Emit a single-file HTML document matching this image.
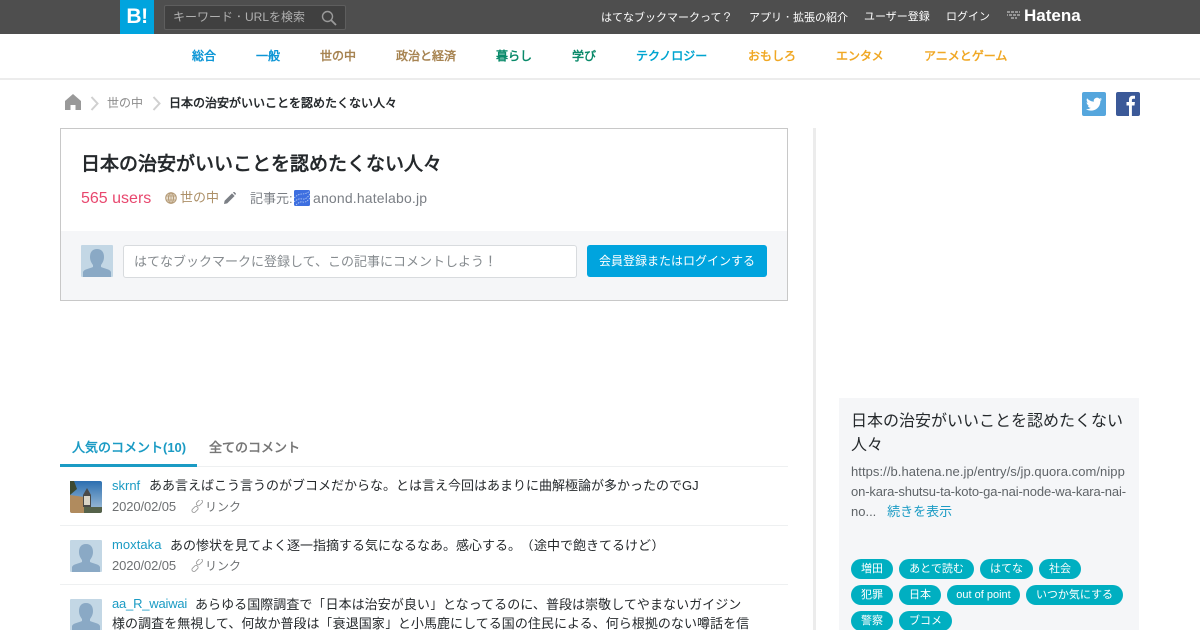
<!DOCTYPE html>
<html lang="ja"><head><meta charset="utf-8"><title>日本の治安がいいことを認めたくない人々</title>
<style>
html,body{margin:0;padding:0;width:1200px;height:630px;overflow:hidden;background:#fff}
body{position:relative;font-family:"Liberation Sans","WenQuanYi Zen Hei",sans-serif;color:#25292c}
i{font-style:normal;font-family:"IPAGothic","WenQuanYi Zen Hei",sans-serif}
.a{position:absolute;white-space:nowrap}
.nav{font-size:12px;font-weight:bold;top:49px;line-height:14px}
.top{font-size:11px;color:#fff;top:11px;line-height:13px}
.tag{position:absolute;height:20px;line-height:20px;border-radius:10px;background:#00afc1;color:#fff;font-size:11px;text-align:center}
.blue{color:#1b9bc4}
.gray{color:#6d7072}
.sep{position:absolute;left:60px;width:728px;height:1px;background:#eef0f1}
</style></head><body>
<div class="a" style="left:0;top:0;width:1200px;height:34px;background:#4e4e4e"></div>
<div class="a" style="left:120px;top:0;width:34px;height:34px;background:#00a4de;color:#fff;font-weight:bold;font-size:21px;line-height:33px;text-align:center;letter-spacing:-.5px">B!</div>
<div class="a" style="left:164px;top:5px;width:180px;height:23px;background:#404040;border:1px solid #5e5e5e;border-radius:2px"></div>
<div class="a" style="left:173px;top:10px;font-size:12px;line-height:14px;color:#b0b0b0">キーワード<i>・</i>URLを検索</div>
<svg class="a" style="left:321px;top:10px" width="16" height="16" viewBox="0 0 16 16"><circle cx="6.500" cy="6.500" r="5" fill="none" stroke="#9a9a9a" stroke-width="1.400"/><path d="M10 10l5 5" stroke="#9a9a9a" stroke-width="1.800"/></svg>
<div class="a top" style="left:601px">はてなブックマークって<i>？</i></div>
<div class="a top" style="left:749px">アプリ<i>・</i>拡張の紹介</div>
<div class="a top" style="left:864px">ユーザー登録</div>
<div class="a top" style="left:946px">ログイン</div>
<svg class="a" style="left:1006px;top:10px" width="16" height="12" viewBox="0 0 16 12"><path d="M1 2h13M3 5h11M1 5h1M5 8h6" stroke="#ddd" stroke-width="1" stroke-dasharray="3 1" fill="none"/></svg>
<div class="a" style="left:1024px;top:6px;font-size:17px;line-height:20px;font-weight:bold;color:#fff">Hatena</div>

<div class="a" style="left:0;top:78px;width:1200px;height:2px;background:#ececec"></div>
<div class="a nav" style="left:192px;color:#0d96d6">総合</div>
<div class="a nav" style="left:256px;color:#0d96d6">一般</div>
<div class="a nav" style="left:320px;color:#a78452">世の中</div>
<div class="a nav" style="left:396px;color:#a78452">政治と経済</div>
<div class="a nav" style="left:496px;color:#0a8a6a">暮らし</div>
<div class="a nav" style="left:572px;color:#0a8a6a">学び</div>
<div class="a nav" style="left:636px;color:#00a4d0">テクノロジー</div>
<div class="a nav" style="left:748px;color:#f0a825">おもしろ</div>
<div class="a nav" style="left:836px;color:#f0a825">エンタメ</div>
<div class="a nav" style="left:924px;color:#f0a825">アニメとゲーム</div>

<svg class="a" style="left:65px;top:94px" width="16" height="16" viewBox="0 0 16 16"><path d="M8 0L0 7v9h5.500v-5h5v5H16V7z" fill="#999"/></svg>
<svg class="a" style="left:90px;top:96px" width="10" height="15" viewBox="0 0 10 15"><path d="M1.500 1l6 6.500-6 6.500" fill="none" stroke="#d0d0d0" stroke-width="2"/></svg>
<div class="a" style="left:107px;top:96px;font-size:12px;line-height:14px;color:#8b8b8b">世の中</div>
<svg class="a" style="left:152px;top:96px" width="10" height="15" viewBox="0 0 10 15"><path d="M1.500 1l6 6.500-6 6.500" fill="none" stroke="#d0d0d0" stroke-width="2"/></svg>
<div class="a" style="left:169px;top:96px;font-size:12px;line-height:14px;font-weight:bold;color:#25292c">日本の治安がいいことを認めたくない人々</div>

<svg class="a" style="left:1082px;top:92px" width="24" height="24" viewBox="0 0 24 24"><rect width="24" height="24" rx="2" fill="#55a6dd"/><path d="M20 7.200c-.6.300-1.200.4-1.900.5.700-.4 1.200-1 1.400-1.800-.6.400-1.300.6-2.100.8a3.300 3.300 0 0 0-5.600 3C9.100 9.600 6.700 8.300 5.100 6.300c-.9 1.500-.4 3.400 1 4.400-.5 0-1-.2-1.500-.4 0 1.600 1.100 3 2.600 3.300-.5.100-1 .1-1.500 0 .4 1.300 1.600 2.200 3.100 2.300A6.600 6.600 0 0 1 4 17.200c5.500 3.400 14.400.6 14.400-8.500.6-.4 1.200-.9 1.600-1.500z" fill="#fff"/></svg>
<svg class="a" style="left:1116px;top:92px" width="24" height="24" viewBox="0 0 24 24"><rect width="24" height="24" rx="2" fill="#3b5998"/><path d="M13 24V13.500h-2.500V10H13V7.500C13 5 14.500 3.700 16.700 3.700c1 0 1.900.1 2.300.1v3h-1.600c-1.200 0-1.500.6-1.500 1.400V10h3l-.4 3.500h-2.600V24z" fill="#fff"/></svg>

<div class="a" style="left:60px;top:128px;width:726px;height:171px;border:1px solid #c8c8c8"></div>
<div class="a" style="left:61px;top:231px;width:726px;height:69px;background:#f5f6f8"></div>
<div class="a" style="left:81px;top:153px;font-size:19px;line-height:24px;font-weight:bold;color:#25292c">日本の治安がいいことを認めたくない人々</div>
<div class="a" style="left:81px;top:189px;font-size:16px;line-height:19px;color:#e8476e">565 users</div>
<svg class="a" style="left:165px;top:192px" width="12" height="12" viewBox="0 0 12 12"><circle cx="6" cy="6" r="5.300" fill="#e8dfd0" stroke="#b49a76"/><ellipse cx="6" cy="6" rx="2.500" ry="5.300" fill="none" stroke="#b49a76"/><path d="M.7 4h10.600M.7 8h10.600M6 .7v10.600" stroke="#b49a76" stroke-width=".8"/></svg>
<div class="a" style="left:180px;top:190px;font-size:13px;line-height:16px;color:#ad9068">世の中</div>
<svg class="a" style="left:224px;top:192px" width="12" height="12" viewBox="0 0 12 12"><path d="M0 12l.6-3.200L8 1.400l2.600 2.600L3.200 11.400zM9 .5l.5-.5c.5-.3 1 0 1.200.2l1 1c.3.300.4.800 0 1.200l-.6.600z" fill="#7b7f85"/></svg>
<div class="a" style="left:250px;top:191px;font-size:13px;line-height:15px;color:#7b7f85">記事元:</div>
<svg class="a" style="left:294px;top:190px" width="16" height="16" viewBox="0 0 16 16"><rect width="16" height="16" rx="1.500" fill="#3d6fe0"/><path d="M0 12q4-4 8-3t8-5M0 8q4-4 8-4t8-3M2 15q4-4 7-3t7-4" fill="none" stroke="#b9cdf5" stroke-width=".8" stroke-dasharray="1.500 1"/></svg>
<div class="a" style="left:313px;top:190px;font-size:14px;line-height:16px;letter-spacing:.17px;color:#7b7f85">anond.hatelabo.jp</div>

<svg class="a" style="left:81px;top:245px" width="32" height="32" viewBox="0 0 32 32"><rect width="32" height="32" rx="1" fill="#c3d7e5"/><path d="M16 4c5 0 7 3.500 7 8 0 3.500-1.500 6-3 8v2c3 1.500 9 2 10 5v5H2v-5c1-3 7-3.500 10-5v-2c-1.500-2-3-4.500-3-8 0-4.500 2-8 7-8z" fill="#8aa9c5"/></svg>
<div class="a" style="left:123px;top:245px;width:452px;height:31px;background:#fff;border:1px solid #d8dbde;border-radius:3px"></div>
<div class="a" style="left:134px;top:254px;font-size:13px;line-height:16px;color:#868b8f">はてなブックマークに登録して、この記事にコメントしよう<i>！</i></div>
<div class="a" style="left:587px;top:245px;width:180px;height:32px;background:#00a4de;border-radius:3px;color:#fff;font-size:12px;line-height:32px;text-align:center">会員登録またはログインする</div>

<div class="a" style="left:813px;top:128px;width:3px;height:502px;background:#ececec"></div>

<div class="a" style="left:72px;top:440px;font-size:13px;line-height:16px;font-weight:bold;color:#1b9bc4">人気のコメント(10)</div>
<div class="a" style="left:209px;top:440px;font-size:13px;line-height:16px;font-weight:bold;color:#777">全てのコメント</div>
<div class="a" style="left:60px;top:466px;width:728px;height:1px;background:#eef0f1"></div>
<div class="a" style="left:60px;top:464px;width:137px;height:3px;background:#1b9bc4"></div>

<svg class="a" style="left:70px;top:481px" width="32" height="32" viewBox="0 0 32 32"><defs><linearGradient id="s" x1="0" y1="0" x2="0" y2="1"><stop offset="0" stop-color="#2c6fb0"/><stop offset="1" stop-color="#a9c4da"/></linearGradient></defs><rect width="32" height="32" rx="2" fill="url(#s)"/><path d="M0 0h4l3 8-7 6z" fill="#3d4a30"/><path d="M0 14l14 2v16H2q-2 0-2-2z" fill="#b08b5e"/><path d="M13 14l4-7 4 7v12h-8z" fill="#4a4a48"/><path d="M14 15h6v9h-6z" fill="#d8d4c6"/><path d="M14 32v-6h18v4q0 2-2 2z" fill="#55624a"/></svg>
<div class="a blue" style="left:112px;top:478px;font-size:13px;line-height:16px">skrnf</div>
<div class="a" style="left:149px;top:478px;font-size:13px;line-height:16px">ああ言えばこう言うのがブコメだからな。とは言え今回はあまりに曲解極論が多かったのでGJ</div>
<div class="a gray" style="left:112px;top:499px;font-size:13px;line-height:16px;letter-spacing:-.1px">2020/02/05</div>
<svg class="a" style="left:191px;top:500px" width="14" height="14" viewBox="0 0 14 14"><g fill="none" stroke="#9a9a9a" stroke-width=".9"><rect x="7.500" y="-1.800" width="4" height="7" rx="2" transform="rotate(45 9.500 1.700) translate(0 1.500)"/><rect x="2" y="6" width="4" height="7" rx="2" transform="rotate(45 4 9.500)"/></g></svg>
<div class="a gray" style="left:205px;top:499px;font-size:12px;line-height:16px">リンク</div>
<div class="sep" style="top:525px"></div>

<svg class="a" style="left:70px;top:540px" width="32" height="32" viewBox="0 0 32 32"><rect width="32" height="32" rx="1" fill="#c3d7e5"/><path d="M16 4c5 0 7 3.500 7 8 0 3.500-1.500 6-3 8v2c3 1.500 9 2 10 5v5H2v-5c1-3 7-3.500 10-5v-2c-1.500-2-3-4.500-3-8 0-4.500 2-8 7-8z" fill="#8aa9c5"/></svg>
<div class="a blue" style="left:112px;top:537px;font-size:13px;line-height:16px;letter-spacing:.05px">moxtaka</div>
<div class="a" style="left:170px;top:538px;font-size:13px;line-height:16px">あの惨状を見てよく逐一指摘する気になるなあ。感心する。<i>（</i>途中で飽きてるけど<i>）</i></div>
<div class="a gray" style="left:112px;top:558px;font-size:13px;line-height:16px;letter-spacing:-.1px">2020/02/05</div>
<svg class="a" style="left:191px;top:559px" width="14" height="14" viewBox="0 0 14 14"><g fill="none" stroke="#9a9a9a" stroke-width=".9"><rect x="7.500" y="-1.800" width="4" height="7" rx="2" transform="rotate(45 9.500 1.700) translate(0 1.500)"/><rect x="2" y="6" width="4" height="7" rx="2" transform="rotate(45 4 9.500)"/></g></svg>
<div class="a gray" style="left:205px;top:558px;font-size:12px;line-height:16px">リンク</div>
<div class="sep" style="top:584px"></div>

<svg class="a" style="left:70px;top:599px" width="32" height="32" viewBox="0 0 32 32"><rect width="32" height="32" rx="1" fill="#c3d7e5"/><path d="M16 4c5 0 7 3.500 7 8 0 3.500-1.500 6-3 8v2c3 1.500 9 2 10 5v5H2v-5c1-3 7-3.500 10-5v-2c-1.500-2-3-4.500-3-8 0-4.500 2-8 7-8z" fill="#8aa9c5"/></svg>
<div class="a blue" style="left:112px;top:596px;font-size:13px;line-height:16px;letter-spacing:-.2px">aa_R_waiwai</div>
<div class="a" style="left:195px;top:597px;font-size:13px;line-height:16px;letter-spacing:.05px">あらゆる国際調査で<i>「</i>日本は治安が良い<i>」</i>となってるのに、普段は崇敬してやまないガイジン</div>
<div class="a" style="left:112px;top:616px;font-size:13px;line-height:16px;letter-spacing:.04px">様の調査を無視して、何故か普段は<i>「</i>衰退国家<i>」</i>と小馬鹿にしてる国の住民による、何ら根拠のない噂話を信</div>

<div class="a" style="left:839px;top:398px;width:300px;height:232px;background:#f5f6f8"></div>
<div class="a" style="left:851px;top:410px;font-size:16px;line-height:24px;color:#25292c">日本の治安がいいことを認めたくない<br>人々</div>
<div class="a" style="left:851px;top:462px;font-size:13px;line-height:20px;color:#5f6468"><span style="letter-spacing:.06px">https://b.hatena.ne.jp/entry/s/jp.quora.com/nipp</span><br><span style="letter-spacing:-.13px">on-kara-shutsu-ta-koto-ga-nai-node-wa-kara-nai-</span><br>no...&nbsp;&nbsp;&nbsp;<span class="blue">続きを表示</span></div>

<div class="tag" style="left:851px;top:559px;width:42px">増田</div>
<div class="tag" style="left:899px;top:559px;width:75px">あとで読む</div>
<div class="tag" style="left:980px;top:559px;width:53px">はてな</div>
<div class="tag" style="left:1039px;top:559px;width:42px">社会</div>
<div class="tag" style="left:851px;top:585px;width:42px">犯罪</div>
<div class="tag" style="left:899px;top:585px;width:42px">日本</div>
<div class="tag" style="left:947px;top:585px;width:73px">out of point</div>
<div class="tag" style="left:1026px;top:585px;width:97px">いつか気にする</div>
<div class="tag" style="left:851px;top:611px;width:42px">警察</div>
<div class="tag" style="left:899px;top:611px;width:53px">ブコメ</div>
</body></html>
